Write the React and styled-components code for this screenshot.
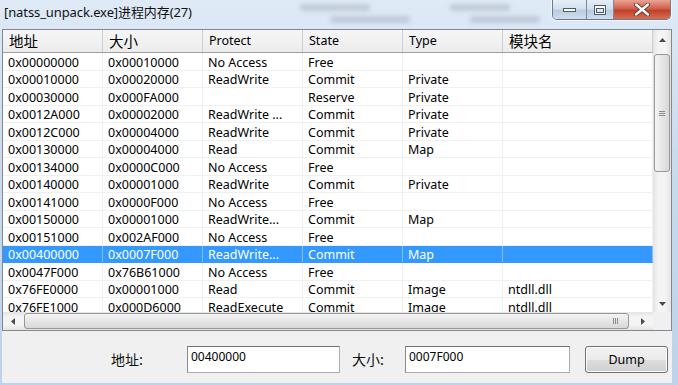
import React from 'react';
import styled, { createGlobalStyle } from 'styled-components';

const GlobalStyle = createGlobalStyle`
  html, body {
    margin: 0;
    padding: 0;
    background: #cfe0f1;
  }
  * {
    box-sizing: border-box;
  }
`;

const Window = styled.div`
  width: 678px;
  height: 385px;
  display: flex;
  flex-direction: column;
  background: linear-gradient(180deg, #dfeaf6 0%, #c9dcef 40%, #bcd3eb 100%);
  overflow: hidden;
  font-family: "Noto Sans", "Noto Sans CJK SC", sans-serif;
`;

const TitleBar = styled.div`
  height: 29px;
  display: flex;
  align-items: flex-start;
  padding-left: 4px;
  position: relative;
`;

const TitleText = styled.div`
  font-size: 13px;
  line-height: 24px;
  color: #111;
  letter-spacing: -0.1px;
`;

const BlurText = styled.div`
  position: absolute;
  top: ${(p) => p.top}px;
  left: ${(p) => p.left}px;
  width: ${(p) => p.w}px;
  height: 7px;
  border-radius: 4px;
  background: rgba(120, 130, 145, 0.28);
  filter: blur(2px);
`;

const WinButtons = styled.div`
  margin-left: auto;
  margin-right: 7px;
  display: flex;
  height: 20px;
  border: 1px solid #6c7a8c;
  border-top: none;
  border-radius: 0 0 5px 5px;
  overflow: hidden;
  box-shadow: 0 0 0 1px rgba(255, 255, 255, 0.6);
`;

const WinButton = styled.div`
  width: ${(p) => p.w}px;
  height: 100%;
  display: flex;
  align-items: center;
  justify-content: center;
  border-left: ${(p) => (p.first ? 'none' : '1px solid #7d8b9c')};
  background: ${(p) =>
    p.close
      ? 'linear-gradient(180deg, #e8a493 0%, #d0604a 45%, #c2402b 55%, #d86e4f 100%)'
      : 'linear-gradient(180deg, #e6eef7 0%, #d3e0ee 45%, #bccde1 55%, #cfdceb 100%)'};
`;

const Client = styled.div`
  flex: 1;
  display: flex;
  flex-direction: column;
  margin: 0 6px 2px 2px;
  background: #f0f0f0;
`;

const ListView = styled.div`
  height: 302px;
  border: 1px solid #828790;
  display: grid;
  grid-template-columns: 1fr 18px;
  grid-template-rows: 1fr 18px;
  background: #fff;
`;

const Content = styled.div`
  overflow: hidden;
  display: flex;
  flex-direction: column;
`;

const Row = styled.div`
  display: grid;
  grid-template-columns: 100px 100px 100px 100px 100px 1fr;
  height: ${(p) => (p.header ? 23 : 17.5)}px;
  flex-shrink: 0;
  background: ${(p) => (p.header ? 'linear-gradient(180deg, #f6f6f6 0%, #ececec 100%)' : p.selected ? '#3399ff' : '#fff')};
  border-bottom: 1px solid ${(p) => (p.header ? '#a0a0a0' : p.selected ? '#3399ff' : '#f0f0f0')};
  color: ${(p) => (p.selected ? '#fff' : '#000')};
`;

const Cell = styled.div`
  padding-left: ${(p) => (p.header ? 6 : 5)}px;
  padding-top: ${(p) => (p.header ? 0 : 1.5)}px;
  border-right: 1px solid ${(p) => (p.header ? '#cfcfcf' : p.selected ? '#7fbfff' : '#f0f0f0')};
  font-family: ${(p) => (p.cjk ? '"Noto Sans CJK SC", sans-serif' : '"Noto Sans", "Noto Sans CJK SC", sans-serif')};
  font-size: ${(p) => (p.cjk ? 14.5 : 12.5)}px;
  line-height: ${(p) => (p.header ? 22 : 15)}px;
  white-space: nowrap;
  overflow: hidden;
`;

const VScroll = styled.div`
  display: flex;
  flex-direction: column;
  background: linear-gradient(90deg, #e4e4e4 0%, #f4f4f4 30%, #f4f4f4 70%, #e4e4e4 100%);
  padding: 1px 0 0;
`;

const HScroll = styled.div`
  display: flex;
  background: linear-gradient(180deg, #e4e4e4 0%, #f4f4f4 30%, #f4f4f4 70%, #e4e4e4 100%);
`;

const Arrow = styled.div`
  width: ${(p) => (p.horizontal ? 20 : 18)}px;
  height: ${(p) => (p.horizontal ? 18 : 17)}px;
  display: flex;
  align-items: center;
  justify-content: center;
  flex-shrink: 0;
`;

const Thumb = styled.div`
  margin: ${(p) => (p.horizontal ? '1px 4px 1px 1px' : '6px 1px 0')};
  ${(p) => (p.horizontal ? 'flex: 1;' : `height: ${p.len}px;`)}
  border: 1px solid #979797;
  border-radius: 3px;
  background: ${(p) =>
    p.horizontal
      ? 'linear-gradient(180deg, #f5f5f5 0%, #e6e6e6 50%, #d8d8d8 100%)'
      : 'linear-gradient(90deg, #f5f5f5 0%, #e6e6e6 50%, #d8d8d8 100%)'};
  display: flex;
  align-items: center;
  justify-content: ${(p) => (p.horizontal ? 'flex-end' : 'center')};
  padding-right: ${(p) => (p.horizontal ? 10 : 0)}px;
`;

const Grip = styled.div`
  display: flex;
  flex-direction: ${(p) => (p.horizontal ? 'row' : 'column')};
  gap: 1px;
  span {
    display: block;
    background: #8a8a8a;
    width: ${(p) => (p.horizontal ? 1 : 6)}px;
    height: ${(p) => (p.horizontal ? 6 : 1)}px;
  }
`;

const Spacer = styled.div`
  flex: 1;
`;

const Corner = styled.div`
  background: #f0f0f0;
`;

const Footer = styled.div`
  flex: 1;
  display: flex;
  align-items: center;
  padding: 4px 0 0 109px;
`;

const Label = styled.div`
  font-family: "Noto Sans CJK SC", sans-serif;
  font-size: 14px;
  color: #111;
  width: ${(p) => p.w}px;
`;

const Input = styled.div`
  width: ${(p) => p.w}px;
  height: 27px;
  background: #fff;
  border: 1px solid #abadb3;
  border-top-color: #707070;
  border-left-color: #8a8a8a;
  font-family: "Noto Sans", sans-serif;
  font-size: 12px;
  line-height: 20px;
  padding-left: 3px;
  margin-right: ${(p) => p.mr}px;
  color: #000;
`;

const Button = styled.div`
  width: 83px;
  height: 27px;
  border: 1px solid #707070;
  border-radius: 3px;
  background: linear-gradient(180deg, #f2f2f2 0%, #ebebeb 50%, #dddddd 51%, #cfcfcf 100%);
  box-shadow: inset 0 0 0 1px #fcfcfc;
  display: flex;
  align-items: center;
  justify-content: center;
  font-family: "Noto Sans", sans-serif;
  font-size: 12.5px;
  color: #000;
`;

const rows = [
  ['0x00000000', '0x00010000', 'No Access', 'Free', '', ''],
  ['0x00010000', '0x00020000', 'ReadWrite', 'Commit', 'Private', ''],
  ['0x00030000', '0x000FA000', '', 'Reserve', 'Private', ''],
  ['0x0012A000', '0x00002000', 'ReadWrite ...', 'Commit', 'Private', ''],
  ['0x0012C000', '0x00004000', 'ReadWrite', 'Commit', 'Private', ''],
  ['0x00130000', '0x00004000', 'Read', 'Commit', 'Map', ''],
  ['0x00134000', '0x0000C000', 'No Access', 'Free', '', ''],
  ['0x00140000', '0x00001000', 'ReadWrite', 'Commit', 'Private', ''],
  ['0x00141000', '0x0000F000', 'No Access', 'Free', '', ''],
  ['0x00150000', '0x00001000', 'ReadWrite...', 'Commit', 'Map', ''],
  ['0x00151000', '0x002AF000', 'No Access', 'Free', '', ''],
  ['0x00400000', '0x0007F000', 'ReadWrite...', 'Commit', 'Map', ''],
  ['0x0047F000', '0x76B61000', 'No Access', 'Free', '', ''],
  ['0x76FE0000', '0x00001000', 'Read', 'Commit', 'Image', 'ntdll.dll'],
  ['0x76FE1000', '0x000D6000', 'ReadExecute', 'Commit', 'Image', 'ntdll.dll'],
];

const headers = [
  { t: '地址', cjk: true },
  { t: '大小', cjk: true },
  { t: 'Protect' },
  { t: 'State' },
  { t: 'Type' },
  { t: '模块名', cjk: true },
];

const Tri = ({ dir }) => {
  const pts = {
    up: '0,4 3.5,0 7,4',
    down: '0,0 3.5,4 7,0',
    left: '4,0 0,3.5 4,7',
    right: '0,0 4,3.5 0,7',
  }[dir];
  const vertical = dir === 'up' || dir === 'down';
  return (
    <svg width={vertical ? 7 : 4} height={vertical ? 4 : 7}>
      <polygon points={pts} fill="#4a4a4a" />
    </svg>
  );
};

const Grips = ({ horizontal }) => (
  <Grip horizontal={horizontal}>
    <span />
    <span />
    <span />
  </Grip>
);

export default function App() {
  return (
    <>
      <GlobalStyle />
      <Window>
        <TitleBar>
          <BlurText top={4} left={300} w={70} />
          <BlurText top={16} left={330} w={80} />
          <BlurText top={4} left={450} w={60} />
          <BlurText top={16} left={470} w={70} />
          <TitleText>[natss_unpack.exe]进程内存(27)</TitleText>
          <WinButtons>
            <WinButton first w={33}>
              <svg width="13" height="4">
                <rect x="0.5" y="0.5" width="12" height="3" fill="#fff" stroke="#4d5a6b" />
              </svg>
            </WinButton>
            <WinButton w={27}>
              <svg width="12" height="10">
                <rect x="0.5" y="0.5" width="11" height="9" fill="#fff" stroke="#4d5a6b" />
                <rect x="2.5" y="3.5" width="7" height="4" fill="#dde6f0" stroke="#4d5a6b" />
              </svg>
            </WinButton>
            <WinButton close w={57}>
              <svg width="16" height="13">
                <path d="M2 1.5 L14 11.5 M14 1.5 L2 11.5" stroke="#5a2a22" strokeWidth="4" strokeLinecap="round" />
                <path d="M2 1.5 L14 11.5 M14 1.5 L2 11.5" stroke="#fff" strokeWidth="2.4" strokeLinecap="round" />
              </svg>
            </WinButton>
          </WinButtons>
        </TitleBar>
        <Client>
          <ListView>
            <Content>
              <Row header>
                {headers.map((h, i) => (
                  <Cell key={i} header cjk={h.cjk}>
                    {h.t}
                  </Cell>
                ))}
              </Row>
              {rows.map((r, i) => (
                <Row key={i} selected={i === 11}>
                  {r.map((c, j) => (
                    <Cell key={j} selected={i === 11} cjk={false}>
                      {c}
                    </Cell>
                  ))}
                </Row>
              ))}
            </Content>
            <VScroll>
              <Arrow>
                <Tri dir="up" />
              </Arrow>
              <Thumb len={118}>
                <Grips />
              </Thumb>
              <Spacer />
              <Arrow>
                <Tri dir="down" />
              </Arrow>
            </VScroll>
            <HScroll>
              <Arrow horizontal>
                <Tri dir="left" />
              </Arrow>
              <Thumb horizontal>
                <Grips horizontal />
              </Thumb>
              <Arrow horizontal>
                <Tri dir="right" />
              </Arrow>
            </HScroll>
            <Corner />
          </ListView>
          <Footer>
            <Label w={76}>地址:</Label>
            <Input w={153} mr={12}>00400000</Input>
            <Label w={53}>大小:</Label>
            <Input w={165} mr={15}>0007F000</Input>
            <Button>Dump</Button>
          </Footer>
        </Client>
      </Window>
    </>
  );
}
